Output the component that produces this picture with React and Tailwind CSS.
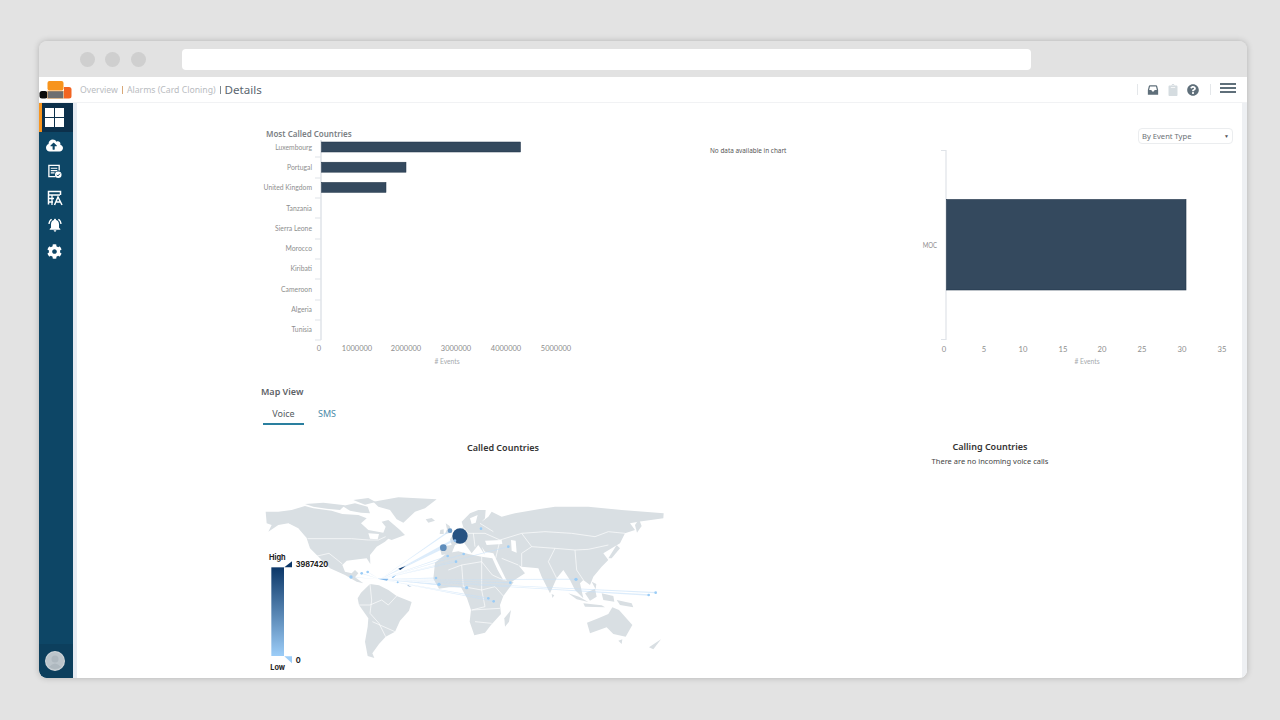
import { FaCloudUploadAlt, FaCog, FaClipboard, FaQuestionCircle } from "react-icons/fa";
import { MdNotificationsActive } from "react-icons/md";

const countries = ["Luxembourg", "Portugal", "United Kingdom", "Tanzania", "Sierra Leone", "Morocco", "Kiribati", "Cameroon", "Algeria", "Tunisia"];
const ticksY = [137, 157, 178, 198, 218, 239, 259, 279, 300, 320, 340];
const barsLeft = [199, 84.5, 64.5];
const axisLeft = [[319, "0"], [357, "1000000"], [406, "2000000"], [456, "3000000"], [506, "4000000"], [556, "5000000"]];
const axisRight = [[944, "0"], [984, "5"], [1023, "10"], [1063, "15"], [1102, "20"], [1142, "25"], [1182, "30"], [1222, "35"]];

// land shapes, coordinates are in the 3x crop of the map
const land = [
  // north america
  "M32 65 L70 65 L110 60 L150 48 L175 55 L230 62 L262 72 L310 75 L335 85 L318 100 L340 120 L385 128 L392 110 L380 95 L400 90 L435 120 L450 135 L410 150 L400 146 L390 155 L365 170 L345 195 L346 222 L335 205 L310 208 L275 212 L262 225 L270 245 L290 250 L300 240 L310 250 L300 262 L325 280 L305 275 L270 255 L225 235 L195 205 L165 175 L155 145 L130 115 L100 100 L70 105 L40 125 L50 105 L35 100 Z",
  "M150 42 L205 38 L270 46 L255 60 L215 56 L175 50 Z",
  "M262 48 L300 40 L338 50 L345 70 L318 68 L285 62 Z",
  "M295 30 L340 24 L362 36 L330 44 Z",
  // greenland
  "M355 35 L430 22 L545 28 L510 55 L480 65 L445 98 L425 88 L405 60 L370 50 Z",
  // south america
  "M318 308 L345 282 L372 286 L400 300 L425 318 L470 336 L462 362 L435 392 L420 425 L392 440 L372 462 L352 490 L358 504 L338 498 L330 455 L338 410 L340 385 L312 345 L308 325 Z",
  "M512 88 L530 84 L540 92 L520 98 Z",
  "M572 100 L584 108 L590 128 L570 132 L576 118 Z",
  "M556 120 L566 118 L566 132 L554 132 Z",
  // eurasia
  "M553 170 L590 165 L585 148 L600 125 L625 112 L620 95 L645 70 L670 60 L692 60 L690 85 L680 95 L700 80 L710 65 L740 80 L780 70 L850 58 L900 50 L1000 50 L1100 60 L1226 70 L1225 85 L1150 95 L1125 100 L1140 120 L1110 130 L1095 160 L1045 190 L1060 210 L1040 230 L1015 260 L1005 285 L985 270 L975 280 L985 325 L960 300 L945 270 L925 240 L905 265 L885 310 L860 260 L850 235 L800 230 L790 225 L810 250 L760 282 L722 205 L715 190 L690 185 L680 170 L690 195 L670 165 L650 190 L625 155 L600 165 L590 190 L560 195 Z",
  // africa
  "M540 218 L575 190 L610 184 L640 192 L680 200 L712 205 L728 240 L745 270 L776 276 L745 318 L735 345 L738 372 L708 405 L690 428 L658 436 L644 395 L648 360 L636 325 L618 292 L582 292 L552 296 L535 266 Z",
  "M748 385 L768 360 L762 395 L750 410 Z",
  // australia and the islands
  "M996 398 L1030 385 L1060 372 L1072 352 L1092 360 L1132 405 L1112 440 L1075 432 L1055 412 L1005 430 Z",
  "M1090 452 L1102 448 L1100 462 Z",
  "M1182 472 L1218 448 L1195 478 Z",
  "M940 310 L972 320 L1000 336 L965 328 Z",
  "M985 340 L1040 346 L1050 352 L990 350 Z",
  "M990 310 L1020 296 L1025 320 L1005 332 Z",
  "M1040 310 L1075 318 L1078 335 L1045 330 Z",
  "M1085 330 L1130 340 L1135 352 L1095 345 Z",
  "M1010 275 L1024 282 L1022 298 Z",
  "M1060 205 L1085 165 L1095 175 L1070 205 Z",
  "M890 312 L898 316 L892 324 Z",
  "M1140 105 L1152 88 L1160 108 L1146 128 Z",
];

const water = [
  "M690 152 L740 150 L742 162 L695 165 Z",
  "M768 150 L782 152 L785 188 L770 182 Z",
  "M340 130 L372 132 L368 148 L345 146 Z",
  "M645 85 L668 75 L662 98 L650 102 Z",
];

const borders = [
  "M158 146 L290 146 L340 150 L370 150 L392 140",
  "M178 200 L222 190 L250 212 L262 222",
  "M100 102 L128 118 L155 145",
  "M345 282 L350 330 L345 370 L372 400 L392 440",
  "M312 345 L345 345 L380 330 L400 345 L425 318",
  "M352 395 L420 425",
  "M625 112 L640 130 L690 130 L735 150 L800 130 L870 125 L950 130 L1020 140 L1060 125 L1110 130",
  "M735 150 L722 205",
  "M800 130 L830 170 L900 175 L960 180 L1000 178 L1060 165",
  "M830 170 L800 190 L800 230",
  "M900 175 L880 215 L905 265",
  "M960 180 L965 240 L985 270",
  "M580 240 L620 225 L680 215 L712 255 L745 270",
  "M620 225 L625 290 L680 300 L720 290 L745 318",
  "M680 200 L680 300 L690 350 L650 360",
  "M650 360 L735 355",
  "M660 395 L710 400",
  "M655 130 L660 170",
  "M675 100 L715 125",
  "M600 130 L610 165",
  "M740 205 L790 225",
];

const lines = [
  [615, 140, 8], [565, 173, 7], [585, 122, 5], [578, 198, 3], [603, 215, 3], [626, 192, 3], [760, 170, 3],
  [543, 264, 3], [552, 283, 4], [635, 293, 3], [700, 325, 3], [716, 334, 3], [766, 278, 3], [963, 268, 3],
  [1181, 315, 4], [1202, 308, 4], [320, 250, 2], [338, 246, 2], [288, 261, 2],
];

const dots = [
  [615, 138, 23, "#265282"], [565, 173, 10, "#5f8dbb"], [585, 122, 7, "#6f9cc8"], [600, 152, 4, "#8fbdea"],
  [578, 198, 4, "#9accf6"], [603, 215, 4, "#9accf6"], [626, 192, 4, "#9accf6"], [760, 170, 4, "#9accf6"],
  [543, 264, 4, "#9accf6"], [552, 283, 5, "#9accf6"], [635, 293, 5, "#9accf6"], [700, 325, 4, "#9accf6"],
  [716, 334, 4, "#9accf6"], [766, 278, 4, "#9accf6"], [963, 268, 5, "#9accf6"], [1181, 315, 4, "#9accf6"],
  [1202, 308, 4, "#9accf6"], [320, 250, 4, "#9accf6"], [338, 246, 4, "#9accf6"], [288, 261, 5, "#9accf6"],
  [678, 116, 4, "#9accf6"], [428, 277, 3, "#9accf6"],
];

function WorldMap() {
  return (
    <svg viewBox="0 0 1260 570" className="w-[420px] h-[190px] block">
      <defs>
        <linearGradient id="legend" x1="0" y1="0" x2="0" y2="1">
          <stop offset="0" stopColor="#0c3768" />
          <stop offset="1" stopColor="#9ccdf8" />
        </linearGradient>
      </defs>
      {land.map((d, i) => (
        <path key={i} d={d} fill="#d9dfe3" />
      ))}
      {water.map((d, i) => (
        <path key={i} d={d} fill="#fff" />
      ))}
      {borders.map((d, i) => (
        <path key={i} d={d} fill="none" stroke="#fff" strokeWidth="2" />
      ))}
      {lines.map(([x, y, w], i) => (
        <path key={i} d={`M${x} ${y - w / 2} L${x} ${y + w / 2} L375 268 Z`} fill="#c4e0f8" fillOpacity="0.6" />
      ))}
      <path d="M368 266 L400 266 L396 272 Z" fill="#7fb6ea" />
      <path d="M430 236 L452 228 L436 240 Z" fill="#143f73" />
      <path d="M410 262 L424 255 L414 264 Z" fill="#7fb6ea" />
      <path d="M458 286 L470 290 L458 288 Z" fill="#5f8dbb" />
      {dots.map(([x, y, r, c], i) => (
        <circle key={i} cx={x} cy={y} r={r} fill={c} />
      ))}
      <rect x="49" y="232" width="38" height="266" fill="url(#legend)" />
      <path d="M88 232 L111 232 L111 214 Z" fill="#0c3768" />
      <path d="M88 499 L111 499 L111 520 Z" fill="#9ccdf8" />
      <g className="font-['Inter',sans-serif]" fontWeight="700" fill="#222">
        <text x="42" y="210" fontSize="22">High</text>
        <text x="122" y="231" fontSize="22">3987420</text>
        <text x="122" y="520" fontSize="22">0</text>
        <text x="46" y="540" fontSize="22">Low</text>
      </g>
    </svg>
  );
}

function Label({ x, y, scale = 0.84, anchor = "middle", size = 8.5, fill = "#8e8e8e", children }) {
  return (
    <text transform={`translate(${x} ${y}) scale(${scale} 1)`} textAnchor={anchor} fontSize={size} fill={fill}>
      {children}
    </text>
  );
}

function CountriesChart() {
  return (
    <svg viewBox="255 140 330 230" className="w-[330px] h-[230px] block font-['Lato',sans-serif]">
      <path d="M321 140 V340" stroke="#dfe3e8" strokeWidth="1.5" />
      {ticksY.map((y) => (
        <path key={y} d={`M315 ${y} H321`} stroke="#dfe3e8" />
      ))}
      {barsLeft.map((w, i) => (
        <rect key={i} x="321.5" y={142 + i * 20.2} width={w} height="10" fill="#34495e" stroke="#1f3347" strokeWidth="0.5" />
      ))}
      {countries.map((c, i) => (
        <Label key={c} x={312} y={149.6 + i * 20.3} anchor="end" scale={0.8}>{c}</Label>
      ))}
      {axisLeft.map(([x, t]) => (
        <Label key={t} x={x} y={351} scale={0.88}>{t}</Label>
      ))}
      <Label x={447} y={364} size={8} fill="#a5a9ad"># Events</Label>
    </svg>
  );
}

function TypeChart() {
  return (
    <svg viewBox="900 144 342 226" className="w-[342px] h-[226px] block font-['Lato',sans-serif]">
      <path d="M941 150.5 H946 V339.5 H941" fill="none" stroke="#dfe3e8" strokeWidth="1.2" />
      <rect x="946.5" y="199.5" width="239.5" height="90.5" fill="#34495e" stroke="#1f3347" strokeWidth="0.6" />
      <Label x={937} y={248} anchor="end" size={7.5} scale={0.8}>MOC</Label>
      {axisRight.map(([x, t]) => (
        <Label key={t} x={x} y={352} scale={0.9}>{t}</Label>
      ))}
      <Label x={1087} y={364} size={8} fill="#a5a9ad"># Events</Label>
    </svg>
  );
}

function Logo() {
  return (
    <svg viewBox="0 0 34 20" className="w-[34px] h-5 block">
      <rect x="0.5" y="11" width="8" height="7.5" rx="2.5" fill="#0b0b0b" />
      <rect x="8.5" y="1" width="16" height="9.5" rx="2" fill="#f7941d" />
      <rect x="8.5" y="11" width="16" height="7.5" fill="#6d6e71" stroke="#f7b267" strokeWidth="0.5" />
      <path d="M25 7 H30 Q32.5 7 32.5 9.5 V16 Q32.5 18.5 30 18.5 H25 Z" fill="#f26522" />
    </svg>
  );
}

function ReportIcon() {
  return (
    <svg viewBox="0 0 16 16" className="w-[15px] h-[15px]" fill="none" stroke="#fff">
      <path d="M9 13.5 H2 V1.5 H13 V7" strokeWidth="1.4" />
      <path d="M4 4.5 H11 M4 7 H11 M4 9.5 H8" strokeWidth="1.2" />
      <circle cx="12" cy="11.5" r="3.5" fill="#fff" stroke="none" />
      <path d="M10.3 11.5 L11.6 12.8 L13.8 10.3" stroke="#0d4666" strokeWidth="1" />
    </svg>
  );
}

function TableIcon() {
  return (
    <svg viewBox="0 0 16 16" className="w-[16px] h-[16px]" fill="none" stroke="#fff">
      <path d="M1.5 14.5 V1.5 H13.5 V5" strokeWidth="1.5" />
      <path d="M1.5 5 H13 M1.5 8.5 H7 M1.5 12 H6 M5 5 V15" strokeWidth="1.3" />
      <path d="M7.5 15 L11 7 L15 15 M9.5 12 H13" strokeWidth="1.5" />
    </svg>
  );
}

function InboxIcon() {
  return (
    <svg viewBox="0 0 14 14" className="w-3 h-3">
      <path d="M2 3 Q2 1.5 4 1.5 H10 Q12 1.5 12 3 L13 7 V12.5 H1 V7 Z" fill="#5f6f7a" />
      <path d="M3.5 3 H10.5 L11.5 7 H9 Q8 9 7 9 Q6 9 5 7 H2.5 Z" fill="#fff" />
    </svg>
  );
}

function Avatar() {
  return (
    <svg viewBox="0 0 20 20" className="w-5 h-5 block">
      <circle cx="10" cy="10" r="10" fill="#d0d6da" />
      <circle cx="10" cy="10" r="9" fill="#bcc5cb" />
      <circle cx="10" cy="8" r="3.5" fill="#aeb8bf" />
      <path d="M4 16 Q10 9 16 16 Q10 20 4 16 Z" fill="#aeb8bf" />
    </svg>
  );
}

export default function App() {
  return (
    <div className="w-[1280px] h-[720px] bg-[#e3e3e3] pt-[41px] pl-[39px] overflow-hidden font-['Noto_Sans',sans-serif]">
      <div className="w-[1208px] h-[637px] rounded-lg overflow-hidden flex flex-col shadow-[0_0_6px_rgba(0,0,0,0.22)]">
        {/* browser chrome */}
        <div className="h-9 shrink-0 bg-[#e2e2e2] flex items-center pl-[41px]">
          <span className="w-[15px] h-[15px] rounded-full bg-[#cfcfcf]" />
          <span className="w-[15px] h-[15px] rounded-full bg-[#cfcfcf] ml-[10px]" />
          <span className="w-[15px] h-[15px] rounded-full bg-[#cfcfcf] ml-[11px]" />
          <div className="w-[849px] h-[21px] ml-[36px] bg-white rounded" />
        </div>

        {/* app header */}
        <div className="h-[26px] shrink-0 bg-white border-b border-[#f1f2f4] flex items-center">
          <Logo />
          <div className="flex items-center ml-[7px] text-[8.7px] text-[#b9bcbf]">
            <span className="mt-[2px]">Overview</span>
            <span className="mx-[4px] mt-[1px] w-px h-2 bg-[#d9a877]" />
            <span className="mt-[2px]">Alarms (Card Cloning)</span>
            <span className="mx-[4px] mt-[1px] w-px h-2 bg-[#7d8890]" />
            <span className="text-[11.6px] text-[#5b6670]">Details</span>
          </div>
          <div className="ml-auto flex items-center text-[#5f6f7a] pr-[11px]">
            <span className="w-px h-[11px] bg-[#e4e7ea] mr-[9px]" />
            <InboxIcon />
            <FaClipboard className="w-3 h-3 ml-2 text-[#d5dce0]" />
            <FaQuestionCircle className="w-3 h-3 ml-2" />
            <span className="w-px h-[11px] bg-[#e4e7ea] ml-[11px]" />
            <div className="flex flex-col gap-[2px] ml-[9px] pb-[3px]">
              <span className="w-4 h-[2px] bg-[#5f6f7a]" />
              <span className="w-4 h-[2px] bg-[#5f6f7a]" />
              <span className="w-4 h-[2px] bg-[#5f6f7a]" />
            </div>
          </div>
        </div>

        <div className="flex-1 flex min-h-0 bg-white">
          {/* sidebar */}
          <div className="w-[34px] shrink-0 bg-[#0d4666] flex flex-col rounded-bl-lg overflow-hidden">
            <div className="w-full h-[29px] shrink-0 bg-[#0c304b] border-l-[3px] border-[#f7941d] flex items-center pl-[3px]">
              <div className="grid grid-cols-2 gap-[1.5px] w-[19px] h-[19px]">
                <span className="bg-white" />
                <span className="bg-white" />
                <span className="bg-white" />
                <span className="bg-white" />
              </div>
            </div>
            <div className="flex flex-col items-center text-white pr-[3px]">
              <div className="h-[26px] flex items-center"><FaCloudUploadAlt className="w-[17px] h-[17px]" /></div>
              <div className="h-[27px] flex items-center"><ReportIcon /></div>
              <div className="h-[26px] flex items-center"><TableIcon /></div>
              <div className="h-[27px] flex items-center"><MdNotificationsActive className="w-4 h-4" /></div>
              <div className="h-[26px] flex items-center"><FaCog className="w-[15px] h-[15px]" /></div>
            </div>
            <div className="mt-auto w-full h-[34px] bg-[#0c3f5d] flex items-center justify-center pr-[3px]">
              <Avatar />
            </div>
          </div>
          <div className="w-1 shrink-0 bg-[#e6ebf2]" />

          {/* main */}
          <div className="flex-1 min-w-0 pl-[178px] pt-[22px]">
            <div className="flex h-[245px]">
              <div className="w-[330px] shrink-0">
                <h3 className="h-[15px] pl-[11px] pt-[3px] text-[8px] leading-[12px] font-semibold text-[#7b8084]">Most Called Countries</h3>
                <CountriesChart />
              </div>
              <div className="w-[315px] shrink-0 pl-[125px] pt-[21px] text-[6.4px] leading-[10px] text-[#555]">
                No data available in chart
              </div>
              <div className="w-[342px] shrink-0 pt-[3px]">
                <div className="ml-[238px] w-[95px] h-4 border border-[#ebedef] rounded-sm flex items-center justify-between pl-[3px] pr-[3px] pt-px text-[7.6px] text-[#6b7075]">
                  <span>By Event Type</span>
                  <span className="text-[5px] text-[#555]">▼</span>
                </div>
                <TypeChart />
              </div>
            </div>

            <div className="pl-[6px] pt-[16px] text-[9px] leading-3 font-semibold text-[#5c6166]">Map View</div>
            <div className="flex ml-[8px] mt-[9px] text-[9px] h-[18px]">
              <div className="w-[41px] text-center text-[#555c62] border-b-2 border-[#2a7f9f] h-[18px]">Voice</div>
              <div className="ml-[14px] text-[#4a8aa8]">SMS</div>
            </div>

            <div className="flex">
              <div className="w-[496px] shrink-0">
                <h4 className="text-center text-[9px] leading-3 font-semibold text-[#333] mt-[17px]">Called Countries</h4>
                <div className="mt-[36px]">
                  <WorldMap />
                </div>
              </div>
              <div className="w-[478px] shrink-0 text-center mt-[16px]">
                <h4 className="text-[9px] leading-3 font-semibold text-[#333]">Calling Countries</h4>
                <p className="text-[7.5px] leading-3 mt-[2px] text-[#444]">There are no incoming voice calls</p>
              </div>
            </div>
          </div>
          <div className="w-[5px] shrink-0 bg-[#eef0f3]" />
        </div>
      </div>
    </div>
  );
}
